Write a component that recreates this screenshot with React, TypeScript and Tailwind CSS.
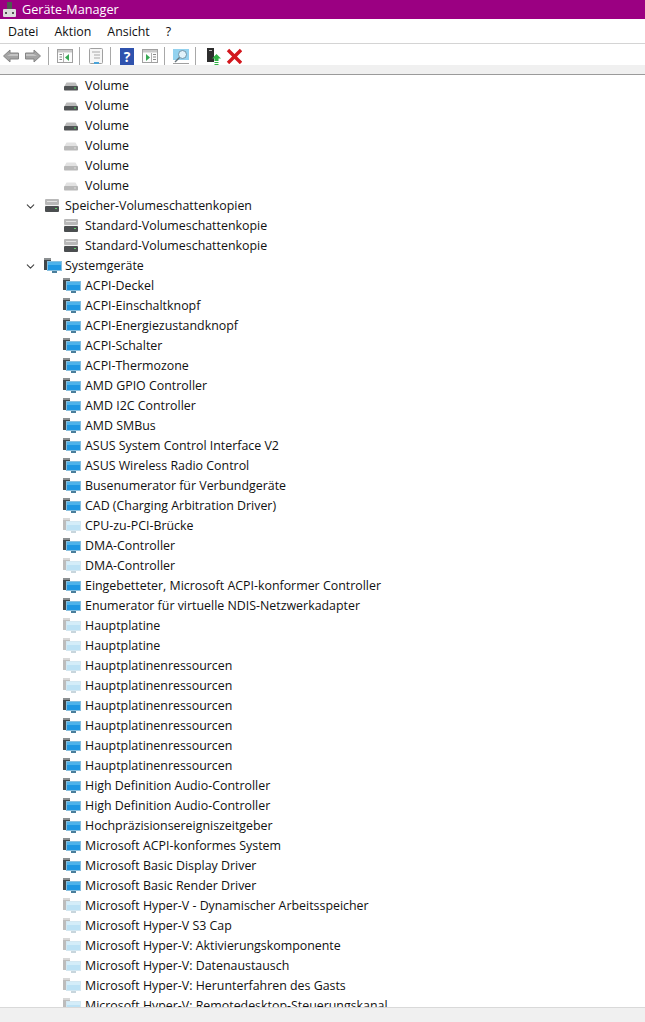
import { ChevronDown } from 'lucide-react';

type IconKind = 'volume' | 'volumeDim' | 'shadow' | 'system' | 'systemDim';

interface Row {
  label: string;
  icon: IconKind;
  group?: boolean;
}

const rows: Row[] = [
  { label: 'Volume', icon: 'volume' },
  { label: 'Volume', icon: 'volume' },
  { label: 'Volume', icon: 'volume' },
  { label: 'Volume', icon: 'volumeDim' },
  { label: 'Volume', icon: 'volumeDim' },
  { label: 'Volume', icon: 'volumeDim' },
  { label: 'Speicher-Volumeschattenkopien', icon: 'shadow', group: true },
  { label: 'Standard-Volumeschattenkopie', icon: 'shadow' },
  { label: 'Standard-Volumeschattenkopie', icon: 'shadow' },
  { label: 'Systemgeräte', icon: 'system', group: true },
  { label: 'ACPI-Deckel', icon: 'system' },
  { label: 'ACPI-Einschaltknopf', icon: 'system' },
  { label: 'ACPI-Energiezustandknopf', icon: 'system' },
  { label: 'ACPI-Schalter', icon: 'system' },
  { label: 'ACPI-Thermozone', icon: 'system' },
  { label: 'AMD GPIO Controller', icon: 'system' },
  { label: 'AMD I2C Controller', icon: 'system' },
  { label: 'AMD SMBus', icon: 'system' },
  { label: 'ASUS System Control Interface V2', icon: 'system' },
  { label: 'ASUS Wireless Radio Control', icon: 'system' },
  { label: 'Busenumerator für Verbundgeräte', icon: 'system' },
  { label: 'CAD (Charging Arbitration Driver)', icon: 'system' },
  { label: 'CPU-zu-PCI-Brücke', icon: 'systemDim' },
  { label: 'DMA-Controller', icon: 'system' },
  { label: 'DMA-Controller', icon: 'systemDim' },
  { label: 'Eingebetteter, Microsoft ACPI-konformer Controller', icon: 'system' },
  { label: 'Enumerator für virtuelle NDIS-Netzwerkadapter', icon: 'system' },
  { label: 'Hauptplatine', icon: 'systemDim' },
  { label: 'Hauptplatine', icon: 'systemDim' },
  { label: 'Hauptplatinenressourcen', icon: 'systemDim' },
  { label: 'Hauptplatinenressourcen', icon: 'systemDim' },
  { label: 'Hauptplatinenressourcen', icon: 'system' },
  { label: 'Hauptplatinenressourcen', icon: 'system' },
  { label: 'Hauptplatinenressourcen', icon: 'system' },
  { label: 'Hauptplatinenressourcen', icon: 'system' },
  { label: 'High Definition Audio-Controller', icon: 'system' },
  { label: 'High Definition Audio-Controller', icon: 'system' },
  { label: 'Hochpräzisionsereigniszeitgeber', icon: 'system' },
  { label: 'Microsoft ACPI-konformes System', icon: 'system' },
  { label: 'Microsoft Basic Display Driver', icon: 'system' },
  { label: 'Microsoft Basic Render Driver', icon: 'system' },
  { label: 'Microsoft Hyper-V - Dynamischer Arbeitsspeicher', icon: 'systemDim' },
  { label: 'Microsoft Hyper-V S3 Cap', icon: 'systemDim' },
  { label: 'Microsoft Hyper-V: Aktivierungskomponente', icon: 'systemDim' },
  { label: 'Microsoft Hyper-V: Datenaustausch', icon: 'systemDim' },
  { label: 'Microsoft Hyper-V: Herunterfahren des Gasts', icon: 'systemDim' },
  { label: 'Microsoft Hyper-V: Remotedesktop-Steuerungskanal', icon: 'systemDim' },
];

function TreeIcon({ kind }: { kind: IconKind }) {
  if (kind === 'volume' || kind === 'volumeDim') {
    const dim = kind === 'volumeDim';
    return (
      <svg width="16" height="16" viewBox="0 0 16 16">
        <path d="M1.5 8 L3.5 4.5 H12.5 L14.5 8 Z" fill={dim ? '#e2e2e2' : '#bcbcbc'} />
        <rect x="1" y="8" width="14" height="4.5" rx="0.8" fill={dim ? '#b8b8b8' : '#505355'} />
        <rect x="11" y="9.5" width="2" height="1" fill={dim ? '#dcdcdc' : '#5fd06a'} />
      </svg>
    );
  }
  if (kind === 'shadow') {
    return (
      <svg width="16" height="16" viewBox="0 0 16 16">
        <rect x="1" y="1" width="14" height="6" rx="1" fill="#b8b8b8" />
        <rect x="3" y="3" width="10" height="1" fill="#e2e2e2" />
        <rect x="1" y="7" width="14" height="1" fill="#f0f0f0" />
        <rect x="1" y="8" width="14" height="6" rx="1" fill="#4b4e50" />
        <rect x="11" y="10" width="2" height="1" fill="#5fd06a" />
      </svg>
    );
  }
  const dim = kind === 'systemDim';
  return (
    <svg width="18" height="16" viewBox="0 0 18 16">
      <rect x="0" y="0" width="7" height="12" fill={dim ? '#bcbcbc' : '#41474a'} />
      <rect x="0" y="0" width="7" height="2" fill={dim ? '#d8d8d8' : '#8c9092'} />
      <rect x="3.5" y="3.5" width="14" height="9" fill={dim ? '#bde2f5' : '#1f97e2'} stroke={dim ? '#d3e7f1' : '#86bfdf'} />
      <rect x="4" y="4" width="13" height="3" fill={dim ? '#d4edf9' : '#4db2ea'} />
      <rect x="8" y="13" width="5" height="2" fill={dim ? '#c8d6dd' : '#4a7f9c'} />
    </svg>
  );
}

function Separator() {
  return <div className="mr-[7px] ml-[5px] h-[19px] w-px shrink-0 bg-[#a8a8a8]" />;
}

function Arrow({ flip }: { flip?: boolean }) {
  return (
    <svg width="18" height="16" viewBox="0 0 18 16" className={flip ? '-scale-x-100' : ''}>
      <path d="M1.5 8 L8 2 V5 H16.5 V11 H8 V14 Z" fill="#a4a4a4" stroke="#858585" strokeWidth="1" />
      <path d="M8.5 6 H16 V8 H5 Z" fill="#c4c4c4" />
    </svg>
  );
}

function WindowIcon({ side }: { side: 'left' | 'right' }) {
  const left = side === 'left';
  return (
    <svg width="18" height="16" viewBox="0 0 18 16">
      <rect x="1.5" y="1.5" width="15" height="13" fill="#fcfcfc" stroke="#a0a0a0" />
      <rect x="2" y="2" width="14" height="2.5" fill="#c8c8c8" />
      <line x1={left ? 7.5 : 10.5} y1="5" x2={left ? 7.5 : 10.5} y2="14" stroke="#b0b0b0" />
      <path
        d={left ? 'M3.5 6.5 H6 M3.5 9 H6 M3.5 11.5 H6' : 'M12 6.5 H15 M12 9 H15 M12 11.5 H15'}
        stroke="#8a8a8a"
      />
      <path d={left ? 'M13 6 V13 L9 9.5 Z' : 'M5 6 V13 L9 9.5 Z'} fill="#35a853" />
    </svg>
  );
}

export default function App() {
  return (
    <div
      className="flex h-[1022px] w-[645px] flex-col overflow-hidden bg-white text-[12.4px] text-[#111111]"
      style={{ fontFamily: '"Open Sans", "Noto Sans", sans-serif' }}
    >
      {/* Titelleiste */}
      <div className="flex h-[19px] items-center bg-[#9b0082] pl-[2px] text-[12.7px] text-white">
        <svg width="15" height="16" viewBox="0 0 15 16" className="mr-[5px]">
          <rect x="5" y="0" width="5" height="8" fill="#4d5c50" />
          <rect x="1" y="7" width="13" height="8" rx="1" fill="#dcdcdc" />
          <rect x="3" y="10" width="2" height="2" fill="#555555" />
          <rect x="10" y="10" width="2" height="2" fill="#555555" />
        </svg>
        <span>Geräte-Manager</span>
      </div>

      {/* Menü */}
      <div className="flex h-[24px] items-center gap-[16px] bg-white pt-[2px] pl-[8px]">
        <span>Datei</span>
        <span>Aktion</span>
        <span>Ansicht</span>
        <span>?</span>
      </div>

      {/* Werkzeugleiste */}
      <div className="flex h-[22px] items-center border-t border-[#d4d4d4] bg-white pt-[3px] pl-[2px]">
        <Arrow />
        <span className="w-[4px]" />
        <Arrow flip />
        <span className="w-px" />
        <Separator />
        <WindowIcon side="left" />
        <Separator />
        <svg width="18" height="18" viewBox="0 0 18 18">
          <rect x="2.5" y="1.5" width="13" height="15" rx="1" fill="#f6f6f6" stroke="#a0a0a0" />
          <path d="M5 5 H13 M7 8 H13 M7 11 H13" stroke="#a8a8a8" />
          <rect x="7" y="15" width="5" height="2" fill="#4aa3d8" />
        </svg>
        <Separator />
        <div className="ml-[2px] flex h-[17px] w-[14px] items-center justify-center bg-[#2f52ad] text-[14px] font-bold text-white">?</div>
        <span className="w-[7px]" />
        <WindowIcon side="right" />
        <Separator />
        <svg width="20" height="18" viewBox="0 0 20 18" className="-mr-[2px]">
          <rect x="1" y="2" width="16" height="11" fill="#93d2ef" />
          <circle cx="10.5" cy="7.5" r="4" fill="#e2f3fb" stroke="#6f94a8" />
          <line x1="7.5" y1="10.5" x2="3" y2="15" stroke="#66747c" strokeWidth="1.5" />
          <line x1="1" y1="16.5" x2="17" y2="16.5" stroke="#a0a0a0" />
        </svg>
        <Separator />
        <svg width="18" height="18" viewBox="0 0 18 18" className="ml-[2px]">
          <rect x="2" y="1" width="7" height="14" fill="#2d2d2d" />
          <rect x="4" y="3" width="3" height="1" fill="#bbbbbb" />
          <path d="M11.5 7 L16 11.5 H13.5 V14 H9.5 V11.5 H7 Z" fill="#2fb344" />
          <rect x="9.5" y="15" width="4" height="1" fill="#2fb344" />
          <rect x="9.5" y="17" width="4" height="1" fill="#2fb344" />
        </svg>
        <svg width="16" height="16" viewBox="0 0 16 16" className="ml-[3px]">
          <path d="M2 2 L15 15 M15 2 L2 15" stroke="#d3171d" strokeWidth="3.4" />
        </svg>
      </div>

      {/* Trennband */}
      <div className="h-[10px] border-b border-[#9a9a9a] bg-[#f0f0f0]" />

      {/* Gerätebaum */}
      <div className="min-h-0 flex-1 overflow-hidden pt-px">
        {rows.map((row, i) => (
          <div key={i} className={`flex h-[20px] items-center ${row.group ? 'pl-[24px]' : 'pl-[63px]'}`}>
            {row.group && <ChevronDown size={13} strokeWidth={2} className="mr-[7px] text-[#444444]" />}
            <span className={`flex shrink-0 items-center ${row.group ? 'w-[21px]' : 'w-[22px]'}`}>
              <TreeIcon kind={row.icon} />
            </span>
            <span className="whitespace-nowrap">{row.label}</span>
          </div>
        ))}
      </div>

      {/* Statusleiste */}
      <div className="h-[15px] shrink-0 border-t border-[#d9d9d9] bg-[#f0f0f0]" />
    </div>
  );
}
